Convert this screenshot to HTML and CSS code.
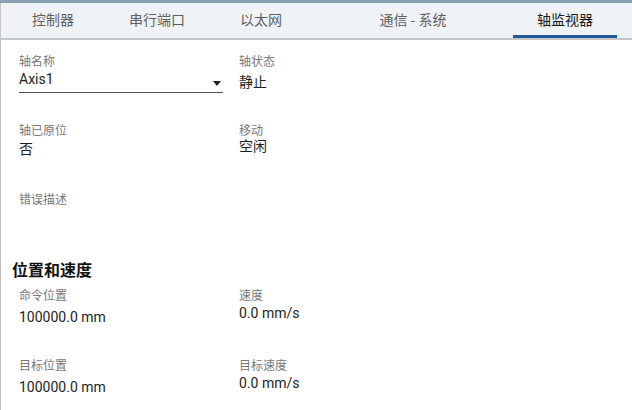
FILE: index.html
```html
<!DOCTYPE html>
<html lang="zh-CN">
<head>
  <meta charset="UTF-8">
  <meta name="viewport" content="width=device-width, initial-scale=1.0">
  <title>轴监视器</title>
  <link rel="stylesheet" href="styles.css">
</head>
<body>
  <div class="topbar"></div>
  <div class="page">
    <div class="tabs">
      <div class="tab">控制器</div>
      <div class="tab">串行端口</div>
      <div class="tab">以太网</div>
      <div class="tab tab-wide">通信 - 系统</div>
      <div class="tab active">轴监视器</div>
    </div>

    <div class="content">
      <div class="grid">
        <div class="field">
          <div class="label">轴名称</div>
          <div class="select">
            <span>Axis1</span>
            <span class="arrow"></span>
          </div>
        </div>
        <div class="field">
          <div class="label">轴状态</div>
          <div class="value first">静止</div>
        </div>
        <div class="field">
          <div class="label">轴已原位</div>
          <div class="value">否</div>
        </div>
        <div class="field">
          <div class="label">移动</div>
          <div class="value up">空闲</div>
        </div>
        <div class="field error">
          <div class="label">错误描述</div>
          <div class="value"></div>
        </div>
      </div>

      <h2 class="section-title">位置和速度</h2>

      <div class="grid pos">
        <div class="field">
          <div class="label">命令位置</div>
          <div class="value">100000.0 mm</div>
        </div>
        <div class="field">
          <div class="label">速度</div>
          <div class="value up">0.0 mm/s</div>
        </div>
        <div class="field">
          <div class="label">目标位置</div>
          <div class="value">100000.0 mm</div>
        </div>
        <div class="field">
          <div class="label">目标速度</div>
          <div class="value up">0.0 mm/s</div>
        </div>
      </div>
    </div>
  </div>
</body>
</html>
```

FILE: styles.css
```css
html, body {
  margin: 0;
  height: 100%;
}

body {
  font-family: Roboto, "Noto Sans CJK SC", sans-serif;
  background-color: #ffffff;
  color: #1e1e1e;
  overflow: hidden;
}

.topbar {
  height: 3px;
  background-color: #8ca0b3;
}

.page {
  border-left: 1px solid #bdbdbd;
  height: calc(100% - 3px);
  box-sizing: border-box;
}

/* Tab strip */
.tabs {
  display: flex;
  height: 35px;
  background-color: #f0f3f6;
  border-bottom: 2px solid #c6c6c6;
  margin-left: -1px;
  border-left: 1px solid #c6c6c6;
}

.tab {
  width: 104px;
  box-sizing: border-box;
  text-align: center;
  font-family: "Noto Sans CJK SC", sans-serif;
  font-size: 14px;
  line-height: 30px;
  color: #5f5f5f;
  border-bottom: 3px solid transparent;
  padding-top: 1px;
}

.tab-wide {
  width: 200px;
}

.tab.active {
  color: #1a1a1a;
  border-bottom-color: #245a9c;
}

/* Fields */
.content {
  padding: 14px 0 0 18px;
}

.grid {
  display: grid;
  grid-template-columns: 220px 1fr;
}

.field {
  height: 69px;
}

.field.error {
  grid-column: span 2;
  height: 66px;
}

.pos .field {
  height: 70px;
}

.label {
  font-size: 12px;
  line-height: 16px;
  color: #777777;
}

.value {
  font-size: 14px;
  line-height: 20px;
  color: #1e1e1e;
}

.value.first {
  margin-top: 2px;
}

.value.up {
  margin-top: -3px;
}

.pos .value {
  margin-top: 3px;
}

.pos .value.up {
  margin-top: -1px;
}

.select {
  width: 204px;
  height: 24px;
  box-sizing: border-box;
  border-bottom: 1px solid #4d4d4d;
  display: flex;
  justify-content: space-between;
  align-items: flex-start;
  font-size: 14px;
  line-height: 20px;
  margin-top: -1px;
}

.arrow {
  width: 0;
  height: 0;
  border-left: 4px solid transparent;
  border-right: 4px solid transparent;
  border-top: 5px solid #1e1e1e;
  margin: 12px 2px 0 0;
}

.section-title {
  margin: 0 0 8px -7px;
  font-family: "Noto Sans CJK SC", sans-serif;
  font-size: 16px;
  line-height: 22px;
  font-weight: bold;
  color: #111111;
}
```
